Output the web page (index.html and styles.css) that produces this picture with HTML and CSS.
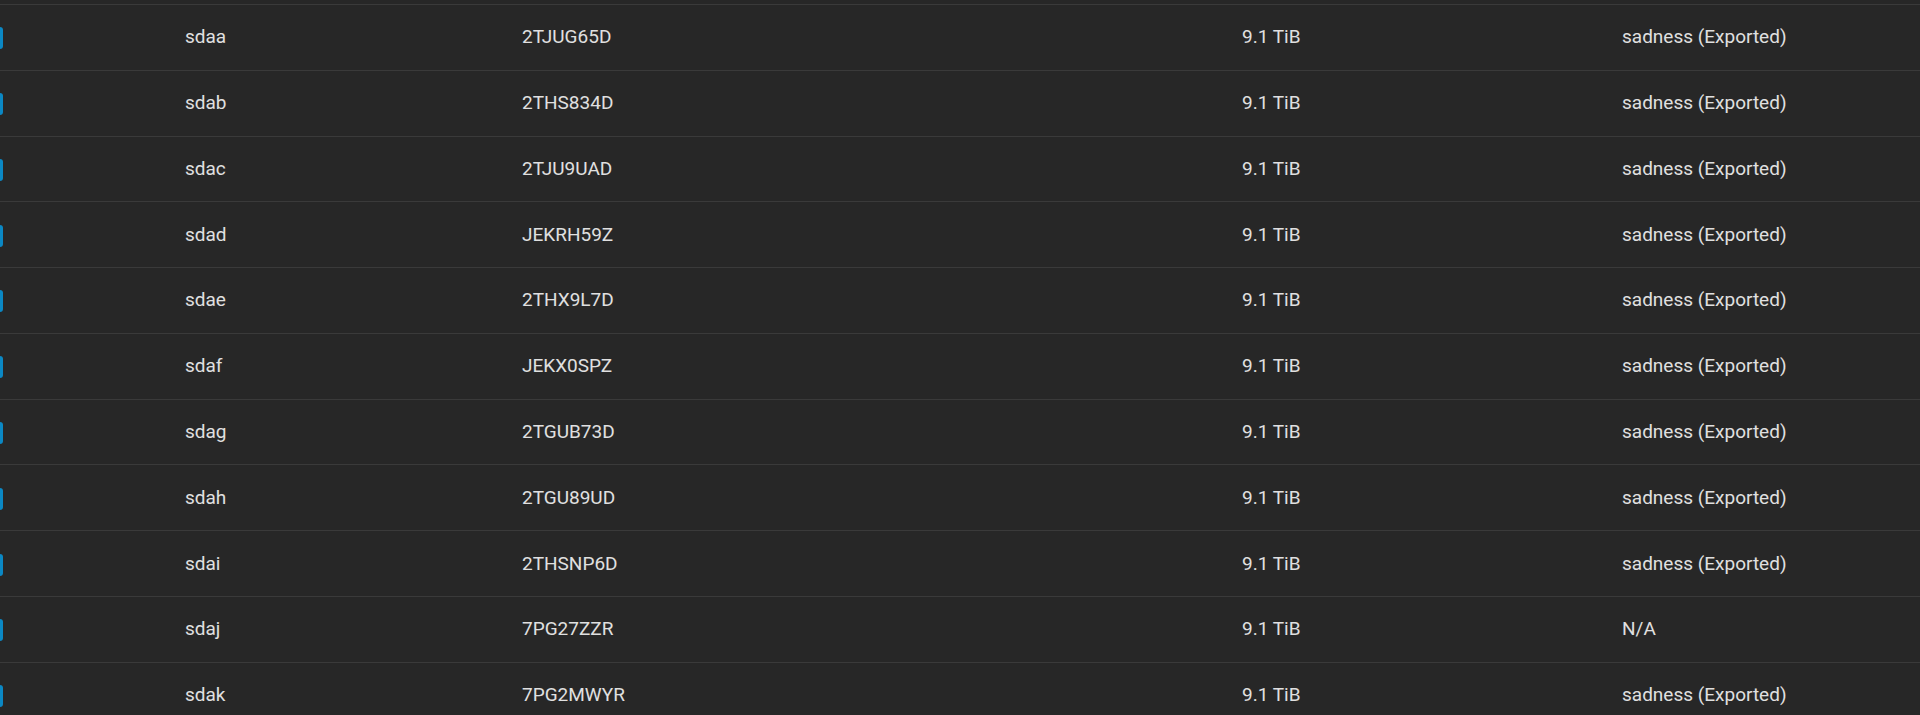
FILE: index.html
```html
<!DOCTYPE html>
<html>
<head>
<meta charset="utf-8">
<link rel="stylesheet" href="styles.css">
</head>
<body>
<div class="table">
  <div class="prev-row"></div>
  <div class="row"><div class="cell sel"><span class="check"></span></div><div class="cell">sdaa</div><div class="cell">2TJUG65D</div><div class="cell">9.1 TiB</div><div class="cell">sadness (Exported)</div></div>
  <div class="row"><div class="cell sel"><span class="check"></span></div><div class="cell">sdab</div><div class="cell">2THS834D</div><div class="cell">9.1 TiB</div><div class="cell">sadness (Exported)</div></div>
  <div class="row"><div class="cell sel"><span class="check"></span></div><div class="cell">sdac</div><div class="cell">2TJU9UAD</div><div class="cell">9.1 TiB</div><div class="cell">sadness (Exported)</div></div>
  <div class="row"><div class="cell sel"><span class="check"></span></div><div class="cell">sdad</div><div class="cell">JEKRH59Z</div><div class="cell">9.1 TiB</div><div class="cell">sadness (Exported)</div></div>
  <div class="row"><div class="cell sel"><span class="check"></span></div><div class="cell">sdae</div><div class="cell">2THX9L7D</div><div class="cell">9.1 TiB</div><div class="cell">sadness (Exported)</div></div>
  <div class="row"><div class="cell sel"><span class="check"></span></div><div class="cell">sdaf</div><div class="cell">JEKX0SPZ</div><div class="cell">9.1 TiB</div><div class="cell">sadness (Exported)</div></div>
  <div class="row"><div class="cell sel"><span class="check"></span></div><div class="cell">sdag</div><div class="cell">2TGUB73D</div><div class="cell">9.1 TiB</div><div class="cell">sadness (Exported)</div></div>
  <div class="row"><div class="cell sel"><span class="check"></span></div><div class="cell">sdah</div><div class="cell">2TGU89UD</div><div class="cell">9.1 TiB</div><div class="cell">sadness (Exported)</div></div>
  <div class="row"><div class="cell sel"><span class="check"></span></div><div class="cell">sdai</div><div class="cell">2THSNP6D</div><div class="cell">9.1 TiB</div><div class="cell">sadness (Exported)</div></div>
  <div class="row"><div class="cell sel"><span class="check"></span></div><div class="cell">sdaj</div><div class="cell">7PG27ZZR</div><div class="cell">9.1 TiB</div><div class="cell">N/A</div></div>
  <div class="row"><div class="cell sel"><span class="check"></span></div><div class="cell">sdak</div><div class="cell">7PG2MWYR</div><div class="cell">9.1 TiB</div><div class="cell">sadness (Exported)</div></div>
</div>
</body>
</html>
```
FILE: styles.css
```css
html, body {
  margin: 0;
  padding: 0;
  background: #272727;
  overflow: hidden;
}
body {
  font-family: Roboto, "Liberation Sans", sans-serif;
  font-size: 19px;
  color: #e0e0e0;
}
.table {
  display: flex;
  flex-direction: column;
  width: 1920px;
}
.prev-row {
  height: 5px;
  box-sizing: border-box;
  border-bottom: 1px solid #3a3a3a;
}
.row {
  display: grid;
  grid-template-columns: 185px 337px 720px 380px 1fr;
  align-items: center;
  height: 65.78px;
  box-sizing: border-box;
  border-bottom: 1px solid #3a3a3a;
  flex-shrink: 0;
}
.cell {
  white-space: nowrap;
  line-height: 20px;
}
.sel {
  display: flex;
  align-items: center;
  overflow: hidden;
}
.check {
  display: block;
  width: 20px;
  height: 22px;
  margin-left: -17px;
  margin-top: 2px;
  border-radius: 3px;
  background: #0b88c4;
}
```
